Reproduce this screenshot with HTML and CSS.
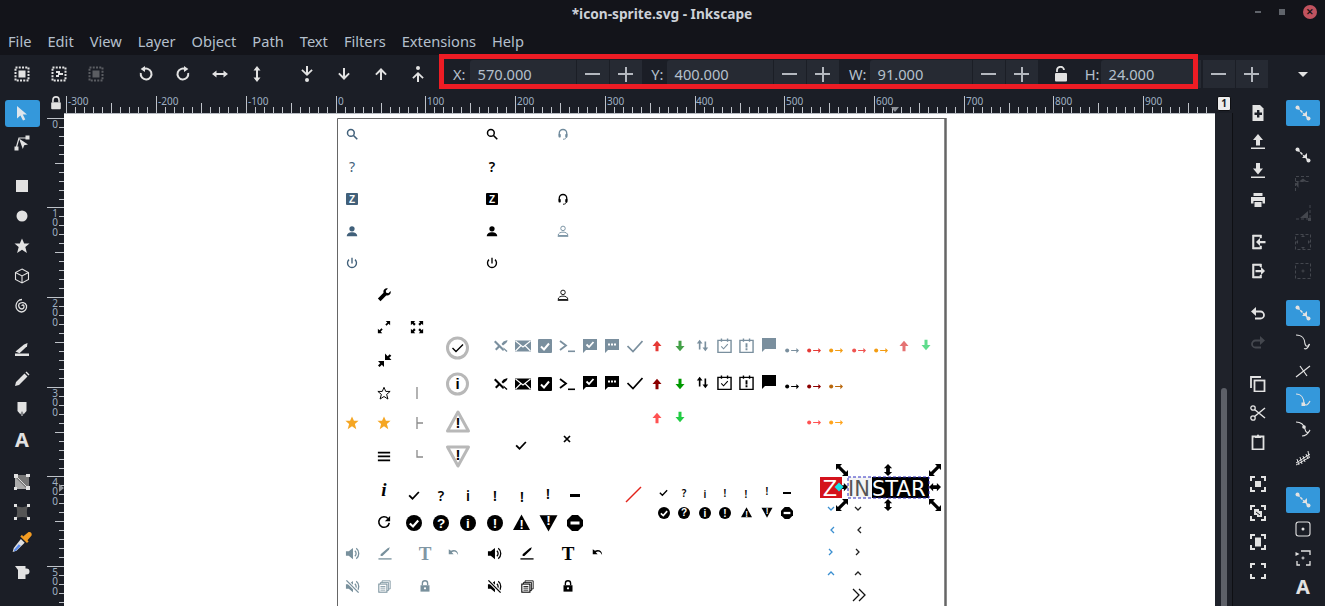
FILE: index.html
```html
<!DOCTYPE html>
<html lang="en">
  <head>
    <meta charset="UTF-8" />
    <title>*icon-sprite.svg - Inkscape</title>
    <link rel="stylesheet" href="styles.css">
  </head>
  <body>
    <svg class="defs" aria-hidden="true">
      <defs>
        <!-- toolbar -->
        <symbol id="sel-all" viewBox="0 0 16 16"><rect x="1.5" y="1.5" width="13" height="13" fill="none" stroke="currentColor" stroke-width="2" stroke-dasharray="2 1.25"/><rect x="4.5" y="4.5" width="7" height="7" fill="currentColor"/></symbol>
        <symbol id="sel-inv" viewBox="0 0 16 16"><rect x="1.5" y="1.5" width="13" height="13" fill="none" stroke="currentColor" stroke-width="2" stroke-dasharray="2 1.25"/><path d="M5 5h4v2h3v2H8v2H5V9h2V7H5z" fill="currentColor"/></symbol>
        <symbol id="rot-ccw" viewBox="0 0 16 16"><path d="M5 3.6A5.4 5.4 0 1 1 2.8 7" fill="none" stroke="currentColor" stroke-width="2"/><path d="M7 0v6L2.600 3z" fill="currentColor"/></symbol>
        <symbol id="rot-cw" viewBox="0 0 16 16"><path d="M11 3.600A5.400 5.400 0 1 0 13.200 7" fill="none" stroke="currentColor" stroke-width="2"/><path d="M9 0v6l4.400-3z" fill="currentColor"/></symbol>
        <symbol id="flip-h" viewBox="0 0 16 16"><path d="M0 8l4.500-3.500v2.500h7V4.500L16 8l-4.500 3.500V9h-7v2.500z" fill="currentColor"/></symbol>
        <symbol id="flip-v" viewBox="0 0 16 16"><path d="M8 0l3.500 4.500H9v7h2.500L8 16l-3.500-4.500H7v-7H4.500z" fill="currentColor"/></symbol>
        <symbol id="to-bottom" viewBox="0 0 16 16"><path d="M7 0h2v6.500l3.500-3.200 1.200 1.300L8 10 2.300 4.600l1.200-1.300L7 6.500z" fill="currentColor"/><circle cx="8" cy="14" r="2" fill="currentColor"/></symbol>
        <symbol id="down" viewBox="0 0 16 16"><path d="M7 2h2v8l3.500-3.300 1.300 1.400L8 14 2.200 8.100l1.300-1.400L7 10z" fill="currentColor"/></symbol>
        <symbol id="up" viewBox="0 0 16 16"><path d="M7 14h2V6l3.500 3.300 1.300-1.400L8 2 2.200 7.900l1.300 1.400L7 6z" fill="currentColor"/></symbol>
        <symbol id="to-top" viewBox="0 0 16 16"><path d="M7 16h2V9.500l3.500 3.200 1.200-1.300L8 6l-5.700 5.400 1.200 1.300L7 9.500z" fill="currentColor"/><circle cx="8" cy="2" r="2" fill="currentColor"/></symbol>
        <symbol id="lock-open" viewBox="0 0 16 16"><path d="M4 6V4.500a3.500 3.500 0 0 1 7-.5" fill="none" stroke="currentColor" stroke-width="1.800"/><rect x="2" y="7" width="12" height="8.500" rx="1" fill="currentColor"/></symbol>
        <symbol id="lock" viewBox="0 0 16 16"><path d="M4.500 7V4.500a3.500 3.500 0 0 1 7 0V7" fill="none" stroke="currentColor" stroke-width="1.800"/><rect x="2.500" y="7" width="11" height="8" rx="1" fill="currentColor"/></symbol>

        <!-- left tools -->
        <symbol id="t-arrow" viewBox="0 0 16 16"><path d="M3 1v12.500l3.400-3L9 15.500l2.300-1.100-2.500-4.800H13z" fill="currentColor"/></symbol>
        <symbol id="t-node" viewBox="0 0 16 16"><rect x="0.500" y="11.500" width="4" height="4" fill="currentColor"/><rect x="11.500" y="0.500" width="4" height="4" fill="currentColor"/><path d="M2.500 12L5 3h7" fill="none" stroke="currentColor" stroke-width="1.200"/><path d="M5 3.500l9 6-3.800.8-1.400 3.700z" fill="currentColor"/></symbol>
        <symbol id="t-rect" viewBox="0 0 16 16"><rect x="2" y="2" width="12" height="12" fill="currentColor"/></symbol>
        <symbol id="t-circle" viewBox="0 0 16 16"><circle cx="8" cy="8" r="5.500" fill="currentColor"/></symbol>
        <symbol id="star" viewBox="0 0 16 16"><path d="M8 .5l2.200 5h5.300l-4.200 3.600 1.600 5.900L8 11.700 3.100 15l1.600-5.900L.5 5.500h5.300z" fill="currentColor"/></symbol>
        <symbol id="t-box" viewBox="0 0 16 16"><path d="M8 1l6.500 3.500v7L8 15l-6.500-3.500v-7zM1.500 4.500L8 8l6.500-3.500M8 8v7" fill="none" stroke="currentColor" stroke-width="1.100"/></symbol>
        <symbol id="t-spiral" viewBox="0 0 16 16"><path d="M8 8a1 1 0 0 1 1.500-1A2.500 2.500 0 0 1 8 11 3.500 3.500 0 0 1 5 6a4.500 4.500 0 0 1 7.500 1.500 5.500 5.500 0 0 1-5 6.500A6 6 0 0 1 2 7.500 6.500 6.500 0 0 1 8 1.500" fill="none" stroke="currentColor" stroke-width="1.300"/></symbol>
        <symbol id="t-calli" viewBox="0 0 16 16"><path d="M1.500 10.500L10 3.500l3.500-1.500-.5 3.300-7.500 7z" fill="currentColor"/><path d="M1 12.500h14V15H1z" fill="currentColor"/></symbol>
        <symbol id="t-pencil" viewBox="0 0 16 16"><path d="M1 15l1-4L10.500 2.500l3 3L5 14zM11.500 1.500l1-1 3 3-1 1z" fill="currentColor"/></symbol>
        <symbol id="t-nib" viewBox="0 0 16 16"><path d="M3.500 1h9v9l-3 3.500L8.500 10v5H7.500v-5l-1 3.500-3-3.500z" fill="currentColor"/></symbol>
        <symbol id="t-grad" viewBox="0 0 16 16"><path d="M1 1h14v14H1z" fill="#777"/><path d="M1 15V3l12 12z" fill="#aaa"/><path d="M1 1l14 14" stroke="#ddd" stroke-width="1"/><path d="M0 0h4v4H0zM12 12h4v4h-4zM12 0h4v3h-4zM0 13h3v3H0z" fill="currentColor"/></symbol>
        <symbol id="t-mesh" viewBox="0 0 16 16"><path d="M2 2c4 1.500 8 1.500 12 0-1.500 4-1.500 8 0 12-4-1.500-8-1.500-12 0 1.500-4 1.500-8 0-12z" fill="#555"/><path d="M0 0h3v3H0zM13 0h3v3h-3zM0 13h3v3H0zM13 13h3v3h-3z" fill="currentColor"/></symbol>
        <symbol id="t-drop" viewBox="0 0 20 20"><path d="M11 5l5-4c1.500-.8 3.500 1 2.700 3l-3.700 4.500 1 1-1.500 1.500-6-6L10 3.500z" fill="#f39c22"/><path d="M9 7.200l3.400 3.400L5 18l-3.500 1 1-3.500z" fill="#e0e0e0"/><path d="M7 12l2 1.500L4.500 18l-2 .7.700-2.200z" fill="#5b8cef"/></symbol>
        <symbol id="t-mug" viewBox="0 0 16 16"><path d="M1 2h10.500v2.500h1a2.500 2.500 0 0 1 0 6h-1V15H4V6z" fill="currentColor"/></symbol>

        <!-- right commands -->
        <symbol id="c-new" viewBox="0 0 16 16"><path d="M2.500 0H10l3.500 3.500V16h-11z" fill="currentColor"/><path d="M7 5h2.400v2.600H12V10H9.400v2.600H7V10H4.500V7.600H7z" fill="#1b1e26"/></symbol>
        <symbol id="c-open" viewBox="0 0 16 16"><path d="M8 0l5 6H10v5.500H6V6H3zM1 13.500h14V15H1z" fill="currentColor"/></symbol>
        <symbol id="c-save" viewBox="0 0 16 16"><path d="M8 11.500l5-6H10V0H6v5.500H3zM1 13.500h14V15H1z" fill="currentColor"/></symbol>
        <symbol id="c-print" viewBox="0 0 16 16"><path d="M3.500 1h9v3h-9zM1 5h14v6.500h-2.500V9h-9v2.500H1zM4.500 10h7v5h-7z" fill="currentColor"/></symbol>
        <symbol id="c-import" viewBox="0 0 16 16"><path d="M2.500 1h9v3H10V2.500H4v11h6V12h1.500v3h-9z" fill="currentColor" stroke="currentColor" stroke-width=".6"/><path d="M15.500 7v2.200H10V12L6 8l4-4v3z" fill="currentColor"/></symbol>
        <symbol id="c-export" viewBox="0 0 16 16"><path d="M2.500 1h9v3H10V2.500H4v11h6V12h1.500v3h-9z" fill="currentColor" stroke="currentColor" stroke-width=".6"/><path d="M5.500 7v2.200H11V12l4-4-4-4v3z" fill="currentColor"/></symbol>
        <symbol id="c-undo" viewBox="0 0 16 16"><path d="M4.500 6.500h6a3.500 3.500 0 0 1 0 7H5" fill="none" stroke="currentColor" stroke-width="1.800"/><path d="M6 2v9L1 6.500z" fill="currentColor"/></symbol>
        <symbol id="c-redo" viewBox="0 0 16 16"><path d="M11.500 6.500h-6a3.500 3.500 0 0 0 0 7H11" fill="none" stroke="currentColor" stroke-width="1.800"/><path d="M10 2v9l5-4.500z" fill="currentColor"/></symbol>
        <symbol id="c-copy" viewBox="0 0 16 16"><path d="M11 1H1v11" fill="none" stroke="currentColor" stroke-width="1.800"/><rect x="4.500" y="4.500" width="10" height="11" fill="none" stroke="currentColor" stroke-width="1.800"/></symbol>
        <symbol id="c-cut" viewBox="0 0 16 16"><circle cx="3" cy="3" r="2.200" fill="none" stroke="currentColor" stroke-width="1.300"/><circle cx="3" cy="13" r="2.200" fill="none" stroke="currentColor" stroke-width="1.300"/><path d="M4.500 4.500L15 13M4.500 11.500L15 3" stroke="currentColor" stroke-width="1.500"/></symbol>
        <symbol id="c-paste" viewBox="0 0 16 16"><path d="M5 2.500H2.500v13h11v-13H11" fill="none" stroke="currentColor" stroke-width="1.800"/><path d="M5 3V1.500h2a1 1 0 0 1 2 0h2V4H5z" fill="currentColor"/></symbol>
        <symbol id="z-sel" viewBox="0 0 16 16"><path d="M1 5V1h4M11 1h4v4M15 11v4h-4M5 15H1v-4" fill="none" stroke="currentColor" stroke-width="2"/><rect x="5" y="5" width="6" height="6" fill="currentColor"/></symbol>
        <symbol id="z-draw" viewBox="0 0 16 16"><path d="M1 5V1h4M11 1h4v4M15 11v4h-4M5 15H1v-4" fill="none" stroke="currentColor" stroke-width="2"/><path d="M4 4h5v2h3v6H7v-2H4z" fill="currentColor"/><path d="M6 7l4 3" stroke="#1b1e26"/></symbol>
        <symbol id="z-page" viewBox="0 0 16 16"><path d="M1 5V1h4M11 1h4v4M15 11v4h-4M5 15H1v-4" fill="none" stroke="currentColor" stroke-width="2"/><rect x="5" y="3.500" width="6" height="9" fill="currentColor"/></symbol>
        <symbol id="z-full" viewBox="0 0 16 16"><path d="M1 5V1h4M11 1h4v4M15 11v4h-4M5 15H1v-4" fill="none" stroke="currentColor" stroke-width="2"/></symbol>
        <symbol id="s-snap" viewBox="0 0 16 16"><path d="M2.500 2.500l11 11" stroke="currentColor" stroke-width="1.500" stroke-dasharray="3 1"/><circle cx="2.500" cy="2.500" r="2" fill="currentColor"/><circle cx="13.500" cy="13.500" r="2" fill="currentColor"/><path d="M12 6v5H7z" fill="currentColor"/></symbol>
        <symbol id="s-dim1" viewBox="0 0 16 16"><path d="M.5 15V.5H15M.5 5.500h15" fill="none" stroke="currentColor" stroke-dasharray="3 2"/><path d="M8 2.500l4 3H4zM.5 8l3-3v7z" fill="currentColor"/></symbol>
        <symbol id="s-dim2" viewBox="0 0 16 16"><path d="M15 0v14H0" fill="none" stroke="currentColor" stroke-dasharray="3 2"/><path d="M13 6v7H5z" fill="currentColor"/><rect x="13" y="13" width="3" height="3" fill="currentColor"/></symbol>
        <symbol id="s-dim3" viewBox="0 0 16 16"><rect x=".5" y=".5" width="15" height="15" fill="none" stroke="currentColor" stroke-dasharray="3 2"/><path d="M8 1l2 2H6zM8 15l2-2H6zM1 8l2-2v4zM15 8l-2-2v4z" fill="currentColor"/></symbol>
        <symbol id="s-dim4" viewBox="0 0 16 16"><rect x=".5" y=".5" width="15" height="15" fill="none" stroke="currentColor" stroke-dasharray="3 2"/><path d="M7.500 6.500h1v1h1v1h-1v1h-1v-1h-1v-1h1z" fill="currentColor"/></symbol>
        <symbol id="s-curve" viewBox="0 0 16 16"><path d="M1 1c6 0 9 4 9 9 1 3 3 3 4.500 0" fill="none" stroke="currentColor" stroke-width="1.100"/><path d="M9 14.500c2 1 4 0 5.500-4.500" fill="none" stroke="currentColor" stroke-width="1.100"/></symbol>
        <symbol id="s-cross" viewBox="0 0 16 16"><path d="M1 14L15 3M5 3l7 10" fill="none" stroke="currentColor" stroke-width="1.200"/></symbol>
        <symbol id="s-node" viewBox="0 0 16 16"><path d="M1 2c5 0 8 4 8 10" fill="none" stroke="currentColor" stroke-width="1.200"/><path d="M9 12c2 2 4 1 6-3" fill="none" stroke="currentColor" stroke-width="1.200"/><rect x="6.500" y="10.500" width="3.500" height="3.500" fill="currentColor"/></symbol>
        <symbol id="s-smooth" viewBox="0 0 16 16"><path d="M1 1c5 0 8 3 9 7 1 5 4 4 5 1M7 15c3 0 6-2 8-6" fill="none" stroke="currentColor" stroke-width="1.100"/><circle cx="9" cy="6" r="1.800" fill="currentColor"/></symbol>
        <symbol id="s-hatch" viewBox="0 0 16 16"><path d="M1 13L15 4M2 9l2 6M5 7l2 7M8 6l2 6M11 4l2 5M13 1l1 6M1 15l14-8" fill="none" stroke="currentColor" stroke-width="1"/></symbol>
        <symbol id="s-page" viewBox="0 0 16 16"><rect x="1" y="1" width="14" height="14" rx="2.500" fill="none" stroke="currentColor" stroke-width="1.100"/><circle cx="8" cy="8" r="1.500" fill="currentColor"/></symbol>
        <symbol id="s-grid" viewBox="0 0 16 16"><path d="M6 1h9v4M15 11v4h-4M5 15H2v-4" fill="none" stroke="currentColor" stroke-width="1.300"/><path d="M.5 2l4 2-4 2z" fill="currentColor"/><path d="M7.500 6.500h1v1h1v1h-1v1h-1v-1h-1v-1h1z" fill="currentColor"/></symbol>

        <!-- drawing sprites -->
        <symbol id="d-search" viewBox="0 0 16 16"><circle cx="6.500" cy="6.500" r="4.500" fill="none" stroke="currentColor" stroke-width="2"/><path d="M10 10l5 5" stroke="currentColor" stroke-width="2.200"/></symbol>
        <symbol id="d-user" viewBox="0 0 16 16"><circle cx="8" cy="5" r="3.500" fill="currentColor"/><path d="M1 15c0-3.500 3-5.500 7-5.500s7 2 7 5.500z" fill="currentColor"/></symbol>
        <symbol id="d-user-line" viewBox="0 0 16 16"><circle cx="8" cy="4.500" r="3" fill="none" stroke="currentColor" stroke-width="1.200"/><path d="M1.500 14c0-3 3-4.500 6.500-4.500s6.500 1.500 6.500 4.500zM1 15.500h14" fill="none" stroke="currentColor" stroke-width="1.200"/></symbol>
        <symbol id="d-power" viewBox="0 0 16 16"><path d="M8 1v7.500" stroke="currentColor" stroke-width="1.800"/><path d="M4 3.500a6 6 0 1 0 8 0" fill="none" stroke="currentColor" stroke-width="1.800"/></symbol>
        <symbol id="d-head" viewBox="0 0 16 16"><path d="M3 10V7a5 5 0 0 1 10 0v3" fill="none" stroke="currentColor" stroke-width="1.800"/><rect x="2" y="8" width="3" height="4.500" rx="1" fill="currentColor"/><rect x="11" y="8" width="3" height="4.500" rx="1" fill="currentColor"/><path d="M12.500 12c0 2-2 3-4.500 3" fill="none" stroke="currentColor" stroke-width="1.200"/></symbol>
        <symbol id="d-wrench" viewBox="0 0 16 16"><path d="M15.500 3.500L13 6l-2.500-.5L10 3l2.500-2.500a4 4 0 0 0-5 5L1 12l3 3 6.500-6.500a4 4 0 0 0 5-5z" fill="currentColor"/></symbol>
        <symbol id="d-expand" viewBox="0 0 16 16"><path d="M10 1h5v5l-1.800-1.800-2.300 2.300-1.400-1.400 2.300-2.300zM6 15H1v-5l1.800 1.800 2.300-2.300 1.400 1.400-2.300 2.300z" fill="currentColor"/></symbol>
        <symbol id="d-full" viewBox="0 0 16 16"><path d="M1 1h5L4.400 2.600 6.500 4.700 4.700 6.500 2.600 4.400 1 6zM15 1v5l-1.600-1.600-2.100 2.100-1.800-1.800 2.100-2.100L10 1zM1 15v-5l1.600 1.600 2.100-2.100 1.800 1.800-2.100 2.100L6 15zM15 15h-5l1.600-1.600-2.100-2.100 1.800-1.800 2.100 2.100L15 10z" fill="currentColor"/></symbol>
        <symbol id="d-star-line" viewBox="0 0 16 16"><path d="M8 1.500l2 4.700h5l-4 3.400 1.500 5.300L8 12l-4.500 2.900L5 9.600l-4-3.400h5z" fill="none" stroke="currentColor" stroke-width="1.100"/></symbol>
        <symbol id="d-menu" viewBox="0 0 16 16"><path d="M1 3h14v2H1zM1 7.500h14v2H1zM1 12h14v2H1z" fill="currentColor"/></symbol>
        <symbol id="d-refresh" viewBox="0 0 16 16"><path d="M12.500 4A6 6 0 1 0 14 9" fill="none" stroke="currentColor" stroke-width="1.800"/><path d="M15 1v6H9z" fill="currentColor"/></symbol>
        <symbol id="d-check" viewBox="0 0 16 16"><path d="M1.500 8.500L6 13l8.500-9" fill="none" stroke="currentColor" stroke-width="2.400"/></symbol>
        <symbol id="d-checkc" viewBox="0 0 16 16"><circle cx="8" cy="8" r="8" fill="currentColor"/><path d="M3.800 8.500L7 11.500l5.200-6" fill="none" stroke="#fff" stroke-width="2.200"/></symbol>
        <symbol id="d-qc" viewBox="0 0 16 16"><circle cx="8" cy="8" r="8" fill="currentColor"/><text x="8" y="12.500" class="sp-q">?</text></symbol>
        <symbol id="d-ic" viewBox="0 0 16 16"><circle cx="8" cy="8" r="8" fill="currentColor"/><text x="8" y="12.800" class="sp-q">i</text></symbol>
        <symbol id="d-ec" viewBox="0 0 16 16"><circle cx="8" cy="8" r="8" fill="currentColor"/><text x="8" y="12.800" class="sp-q">!</text></symbol>
        <symbol id="d-tri" viewBox="0 0 16 16"><path d="M8 .5L16 15H0z" fill="currentColor"/><text x="8" y="14" class="sp-t">!</text></symbol>
        <symbol id="d-itri" viewBox="0 0 16 16"><path d="M0 1h16L8 15.500z" fill="currentColor"/><text x="8" y="10" class="sp-t">!</text></symbol>
        <symbol id="d-stop" viewBox="0 0 16 16"><path d="M5 0h6l5 5v6l-5 5H5l-5-5V5z" fill="currentColor"/><rect x="3.500" y="6.500" width="9" height="3" fill="#fff"/></symbol>
        <symbol id="d-pinoff" viewBox="0 0 16 16"><path d="M1 4l4 4-3 3 1.500 1.500 3-3L10 13l1.500-1.500L2.500 2.500zM14.500 2l-4 1.500-2 2.500 1.500 1.500 2.500-2 1.500-1.500zM10.500 9.500l4 3.500-1 1-3.500-3.500z" fill="currentColor"/></symbol>
        <symbol id="d-mail" viewBox="0 0 16 16"><path d="M0 2.500h16v11H0z" fill="currentColor"/><path d="M.5 3L8 9l7.500-6M.5 13L6 7.500M15.500 13L10 7.500" fill="none" stroke="#fff" stroke-width="1.100"/></symbol>
        <symbol id="d-cbox" viewBox="0 0 16 16"><rect x="1" y="1" width="14" height="14" rx="1" fill="currentColor"/><path d="M4 8.500l3 3 5-6" fill="none" stroke="#fff" stroke-width="2"/></symbol>
        <symbol id="d-term" viewBox="0 0 16 16"><path d="M1 3l6 4.500L1 12" fill="none" stroke="currentColor" stroke-width="1.800"/><path d="M9 12.500h7v1.600H9z" fill="currentColor"/></symbol>
        <symbol id="d-cmt-c" viewBox="0 0 16 16"><path d="M1 1h14v11H4l-3 3z" fill="currentColor"/><path d="M4.500 6.500l2.500 2.500 4.500-5" fill="none" stroke="#fff" stroke-width="1.800"/></symbol>
        <symbol id="d-cmt-d" viewBox="0 0 16 16"><path d="M1 1h14v11H4l-3 3z" fill="currentColor"/><path d="M4 5.500h2v2H4zM7 5.500h2v2H7zM10 5.500h2v2h-2z" fill="#fff"/></symbol>
        <symbol id="d-cmt" viewBox="0 0 16 16"><path d="M1 1h14v11H4l-3 3z" fill="currentColor"/></symbol>
        <symbol id="d-check-l" viewBox="0 0 16 16"><path d="M.5 8L6 13.500 15.500 3" fill="none" stroke="currentColor" stroke-width="1.700"/></symbol>
        <symbol id="d-up" viewBox="0 0 16 16"><path d="M8 1l6 7H10v7H6V8H2z" fill="currentColor"/></symbol>
        <symbol id="d-dn" viewBox="0 0 16 16"><path d="M8 15l6-7H10V1H6v7H2z" fill="currentColor"/></symbol>
        <symbol id="d-updn" viewBox="0 0 16 16"><path d="M4.500 1L8 5.500H5.500V13h-2V5.500H1zM11.500 15l3.500-4.500h-2.500V3h-2v7.500H8z" fill="currentColor"/></symbol>
        <symbol id="d-cal-c" viewBox="0 0 16 16"><path d="M1 2.500h14v13H1z" fill="none" stroke="currentColor" stroke-width="1.500"/><path d="M4 .5h1.500v3.500H4zM10.500 .5H12v3.500h-1.500z" fill="currentColor"/><path d="M4.500 9l2.500 2.500 4.500-5" fill="none" stroke="currentColor" stroke-width="1.200"/></symbol>
        <symbol id="d-cal-e" viewBox="0 0 16 16"><path d="M1 2.500h14v13H1z" fill="none" stroke="currentColor" stroke-width="1.500"/><path d="M4 .5h1.500v3.500H4zM10.500 .5H12v3.500h-1.500zM7 5.500h2V10H7zM7 11h2v2H7z" fill="currentColor"/></symbol>
        <symbol id="d-dot" viewBox="0 0 16 8"><circle cx="2.500" cy="4" r="2.300" fill="currentColor"/><path d="M7 3.300h6V1l3 3-3 3V4.700H7z" fill="currentColor"/></symbol>
        <symbol id="d-speak" viewBox="0 0 16 16"><path d="M1 5.500h3L8.500 2v12L4 10.500H1z" fill="currentColor"/><path d="M10.500 5a4 4 0 0 1 0 6M12 2.500a7 7 0 0 1 0 11" fill="none" stroke="currentColor" stroke-width="1.400"/></symbol>
        <symbol id="d-mute" viewBox="0 0 16 16"><path d="M1 5.500h3L8.500 2v12L4 10.500H1z" fill="currentColor"/><path d="M10.500 5a4 4 0 0 1 0 6M12 2.500a7 7 0 0 1 0 11" fill="none" stroke="currentColor" stroke-width="1.400"/><path d="M1.500 1.500l13 13" stroke="#fff" stroke-width="3.400"/><path d="M1.500 1.500l13 13" stroke="currentColor" stroke-width="1.400"/></symbol>
        <symbol id="d-pen" viewBox="0 0 16 16"><path d="M3 9.500l8-7 2.500-1-1 2.700-7.500 7.300H3z" fill="currentColor"/><path d="M.5 14h15v1.500H.5z" fill="currentColor"/></symbol>
        <symbol id="d-undo" viewBox="0 0 16 16"><path d="M1 3v6.500h6.500L5 7c3-2 6-1.500 8.500 3.500 0-5-4.500-8-9.500-5.500z" fill="currentColor"/></symbol>
        <symbol id="d-stack" viewBox="0 0 16 16"><path d="M5 3V1h10v10h-2M3 5V3h10v10h-2" fill="none" stroke="currentColor" stroke-width="1"/><rect x="1" y="5" width="10" height="10" fill="none" stroke="currentColor" stroke-width="1.300"/><path d="M3 8h6M3 10h6M3 12.500h6" stroke="currentColor"/></symbol>
        <symbol id="d-padlock" viewBox="0 0 16 16"><path d="M4.500 7V4.500a3.500 3.500 0 0 1 7 0V7" fill="none" stroke="currentColor" stroke-width="1.800"/><path d="M2 7h12v8.500H2z" fill="currentColor"/><circle cx="8" cy="11" r="1.500" fill="#fff"/></symbol>
        <symbol id="d-h-d" viewBox="0 0 16 16"><path d="M0 0h8L5.500 2.500l8 8L16 8v8H8l2.500-2.500-8-8L0 8z" fill="#000"/></symbol>
        <symbol id="d-h-a" viewBox="0 0 16 16"><path d="M16 0H8l2.500 2.500-8 8L0 8v8h8l-2.500-2.500 8-8L16 8z" fill="#000"/></symbol>
        <symbol id="d-h-v" viewBox="0 0 16 16"><path d="M8 0l5.500 5.500h-3v5h3L8 16l-5.500-5.500h3v-5h-3z" fill="#000"/></symbol>
        <symbol id="d-h-h" viewBox="0 0 16 16"><path d="M0 8l5.500-5.500v3h5v-3L16 8l-5.500 5.500v-3h-5v3z" fill="#000"/></symbol>

        <!-- ruler steps -->
        <g id="rule-h"><path d="M.5 3v17M9.500 14v6M18.500 14v6M27.500 14v6M36.500 14v6M45.500 10v10M54.500 14v6M63.500 14v6M72.500 14v6M81.500 14v6"/></g>
        <g id="rule-v"><path d="M0 .5h17M12 9.500h5M12 18.500h5M12 27.500h5M12 36.500h5M8 45.500h9M12 54.500h5M12 63.500h5M12 72.500h5M12 81.500h5"/></g>
      </defs>
    </svg>

    <div class="app">
      <header class="titlebar">
        <span class="title">*icon-sprite.svg - Inkscape</span>
        <div class="winctl">
          <span class="win-min"></span>
          <span class="win-max"></span>
          <span class="win-close">✕</span>
        </div>
      </header>

      <nav class="menubar">
        <span>File</span><span>Edit</span><span>View</span><span>Layer</span><span>Object</span><span>Path</span><span>Text</span><span>Filters</span><span>Extensions</span><span>Help</span>
      </nav>

      <div class="toolbar">
        <div class="tb-btn"><svg class="ico"><use href="#sel-all"/></svg></div>
        <div class="tb-btn"><svg class="ico"><use href="#sel-inv"/></svg></div>
        <div class="tb-btn dim"><svg class="ico"><use href="#sel-all"/></svg></div>
        <div class="tb-btn gap"><svg class="ico"><use href="#rot-ccw"/></svg></div>
        <div class="tb-btn"><svg class="ico"><use href="#rot-cw"/></svg></div>
        <div class="tb-btn"><svg class="ico"><use href="#flip-h"/></svg></div>
        <div class="tb-btn"><svg class="ico"><use href="#flip-v"/></svg></div>
        <div class="tb-btn gap"><svg class="ico"><use href="#to-bottom"/></svg></div>
        <div class="tb-btn"><svg class="ico"><use href="#down"/></svg></div>
        <div class="tb-btn"><svg class="ico"><use href="#up"/></svg></div>
        <div class="tb-btn"><svg class="ico"><use href="#to-top"/></svg></div>

        <label class="lbl lbl-x">X:</label>
        <span class="num">570.000</span><span class="step minus"></span><span class="step plus"></span>
        <label class="lbl lbl-y">Y:</label>
        <span class="num">400.000</span><span class="step minus"></span><span class="step plus"></span>
        <label class="lbl lbl-w">W:</label>
        <span class="num num-w">91.000</span><span class="step minus"></span><span class="step plus"></span>
        <div class="lockbtn"><svg class="ico"><use href="#lock-open"/></svg></div>
        <label class="lbl lbl-h">H:</label>
        <span class="num num-h">24.000</span><span class="step minus step-h"></span><span class="step plus"></span>
        <div class="more"></div>
        <div class="redbox"></div>
      </div>

      <div class="workspace">
        <aside class="tools">
          <div class="tool"><div class="active"><svg class="ico"><use href="#t-arrow"/></svg></div></div>
          <div class="tool"><svg class="ico"><use href="#t-node"/></svg></div>
          <div class="tool gap"><svg class="ico"><use href="#t-rect"/></svg></div>
          <div class="tool"><svg class="ico"><use href="#t-circle"/></svg></div>
          <div class="tool"><svg class="ico"><use href="#star"/></svg></div>
          <div class="tool"><svg class="ico"><use href="#t-box"/></svg></div>
          <div class="tool"><svg class="ico"><use href="#t-spiral"/></svg></div>
          <div class="tool gap"><svg class="ico"><use href="#t-calli"/></svg></div>
          <div class="tool"><svg class="ico"><use href="#t-pencil"/></svg></div>
          <div class="tool"><svg class="ico"><use href="#t-nib"/></svg></div>
          <div class="tool tool-a">A</div>
          <div class="tool gap"><svg class="ico"><use href="#t-grad"/></svg></div>
          <div class="tool"><svg class="ico"><use href="#t-mesh"/></svg></div>
          <div class="tool"><svg class="ico big"><use href="#t-drop"/></svg></div>
          <div class="tool"><svg class="ico"><use href="#t-mug"/></svg></div>
        </aside>

        <div class="corner"><svg class="ico lock-ico"><use href="#lock"/></svg></div>

        <svg class="ruler-h" viewBox="64 93 1151 20">
          <g class="ticks">
            <use href="#rule-h" x="66" y="93"/><use href="#rule-h" x="156" y="93"/><use href="#rule-h" x="246" y="93"/><use href="#rule-h" x="336" y="93"/>
            <use href="#rule-h" x="425" y="93"/><use href="#rule-h" x="515" y="93"/><use href="#rule-h" x="605" y="93"/><use href="#rule-h" x="695" y="93"/>
            <use href="#rule-h" x="784" y="93"/><use href="#rule-h" x="874" y="93"/><use href="#rule-h" x="964" y="93"/><use href="#rule-h" x="1053" y="93"/>
            <use href="#rule-h" x="1143" y="93"/>
          </g>
          <g class="rule-txt">
            <text x="68" y="105">-300</text><text x="158" y="105">-200</text><text x="248" y="105">-100</text><text x="338" y="105">0</text>
            <text x="427" y="105">100</text><text x="517" y="105">200</text><text x="607" y="105">300</text><text x="696" y="105">400</text>
            <text x="786" y="105">500</text><text x="876" y="105">600</text><text x="966" y="105">700</text><text x="1055" y="105">800</text>
            <text x="1145" y="105">900</text>
          </g>
          <path d="M891 107h8l-4 5z" fill="#8d9197"/>
        </svg>

        <svg class="ruler-v" viewBox="47 113 17 493">
          <g class="ticks">
            <use href="#rule-v" x="47" y="118"/><use href="#rule-v" x="47" y="207"/><use href="#rule-v" x="47" y="297"/>
            <use href="#rule-v" x="47" y="387"/><use href="#rule-v" x="47" y="476"/><use href="#rule-v" x="47" y="566"/>
          </g>
          <g class="rule-txt mid">
            <text x="55" y="128">0</text>
            <text x="55" y="217">1<tspan x="55" dy="9.300">0</tspan><tspan x="55" dy="9.300">0</tspan></text>
            <text x="55" y="307">2<tspan x="55" dy="9.300">0</tspan><tspan x="55" dy="9.300">0</tspan></text>
            <text x="55" y="397">3<tspan x="55" dy="9.300">0</tspan><tspan x="55" dy="9.300">0</tspan></text>
            <text x="55" y="486">4<tspan x="55" dy="9.300">0</tspan><tspan x="55" dy="9.300">0</tspan></text>
            <text x="55" y="576">5<tspan x="55" dy="9.300">0</tspan><tspan x="55" dy="9.300">0</tspan></text>
          </g>
          <path d="M59 484l5 4-5 4z" fill="#8d9197"/>
        </svg>

        <svg class="canvas" viewBox="64 113 1151 493">
          <rect x="64" y="113" width="1151" height="1" fill="#b6bac0"/>
          <path d="M945 118.500H337.500V606" fill="none" stroke="#666" stroke-width="1"/>
          <path d="M945.500 118V606" fill="none" stroke="#666" stroke-width="2.500"/>

          <!-- account column, slate -->
          <g color="#41607a">
            <use href="#d-search" x="346" y="128" width="12" height="12"/>
            <text x="352" y="172" class="sp-glyph">?</text>
            <rect x="346" y="193" width="12" height="12" rx="1" fill="#41607a"/>
            <text x="352" y="203" class="sp-z">Z</text>
            <use href="#d-user" x="346" y="225" width="12" height="12"/>
            <use href="#d-power" x="346" y="257" width="12" height="12"/>
          </g>
          <!-- account column, black -->
          <g color="#000">
            <use href="#d-search" x="486" y="128" width="12" height="12"/>
            <text x="492" y="172" class="sp-glyph blk">?</text>
            <rect x="486" y="193" width="12" height="12" rx="1"/>
            <text x="492" y="203" class="sp-z">Z</text>
            <use href="#d-user" x="486" y="225" width="12" height="12"/>
            <use href="#d-power" x="486" y="257" width="12" height="12"/>
            <use href="#d-head" x="557" y="193" width="12" height="12"/>
            <use href="#d-user-line" x="557" y="289" width="12" height="12"/>
          </g>
          <g color="#6f8a9c">
            <use href="#d-head" x="557" y="128" width="12" height="12"/>
            <use href="#d-user-line" x="557" y="225" width="12" height="12"/>
          </g>

          <!-- view tools -->
          <g color="#000">
            <use href="#d-wrench" x="377" y="288" width="14" height="14"/>
            <use href="#d-expand" x="377" y="320" width="14" height="14"/>
            <use href="#d-full" x="410" y="320" width="14" height="14"/>
            <path d="M385 353.500V360h6.500l-2.200-2.200 2-2-1.600-1.600-2 2zM384 361h-6l2.200 2.200-2.200 2.200 1.600 1.600 2.200-2.200 2.200 2.200z"/>
            <use href="#d-star-line" x="377" y="386" width="14" height="14"/>
            <use href="#d-menu" x="377" y="449" width="14" height="14"/>
            <use href="#d-refresh" x="377" y="515" width="14" height="14"/>
            <text x="384" y="496" class="sp-info">i</text>
          </g>
          <g color="#f5a623">
            <use href="#star" x="345" y="416" width="14" height="14"/>
            <use href="#star" x="377" y="416" width="14" height="14"/>
          </g>
          <path d="M417 387v12M417 417v12M417 423h6M417 450v7h6" fill="none" stroke="#8a8a8a" stroke-width="1.300"/>

          <!-- status rings -->
          <g fill="none" stroke="#b8b8b8" stroke-width="3">
            <circle cx="457.500" cy="348" r="10"/>
            <circle cx="457.500" cy="384" r="10"/>
            <path d="M458 412l10.500 19h-21z" stroke-linejoin="round"/>
            <path d="M447.500 447h21L458 466z" stroke-linejoin="round"/>
          </g>
          <path d="M452.500 348l3.500 3.500 7-7" fill="none" stroke="#000" stroke-width="1.400"/>
          <text x="457.500" y="389" class="sp-ring">i</text>
          <text x="458" y="428" class="sp-ring">!</text>
          <text x="458" y="460" class="sp-ring">!</text>

          <!-- message row, grey -->
          <g color="#7a8f9e">
            <use href="#d-pinoff" x="493" y="338" width="16" height="16"/>
            <use href="#d-mail" x="515" y="338" width="16" height="16"/>
            <use href="#d-cbox" x="537" y="338" width="16" height="16"/>
            <use href="#d-term" x="559" y="338" width="16" height="16"/>
            <use href="#d-cmt-c" x="582" y="338" width="16" height="16"/>
            <use href="#d-cmt-d" x="604" y="338" width="16" height="16"/>
            <use href="#d-check-l" x="627" y="338" width="16" height="16"/>
            <use href="#d-updn" x="696" y="339" width="13" height="13"/>
            <use href="#d-cal-c" x="717" y="338" width="15" height="15"/>
            <use href="#d-cal-e" x="739" y="338" width="15" height="15"/>
            <use href="#d-cmt" x="761" y="337" width="16" height="16"/>
            <use href="#d-dot" x="785" y="347" width="14" height="7"/>
          </g>
          <!-- message row, black -->
          <g color="#000">
            <use href="#d-pinoff" x="493" y="376" width="16" height="16"/>
            <use href="#d-mail" x="515" y="376" width="16" height="16"/>
            <use href="#d-cbox" x="537" y="376" width="16" height="16"/>
            <use href="#d-term" x="559" y="376" width="16" height="16"/>
            <use href="#d-cmt-c" x="582" y="375" width="16" height="16"/>
            <use href="#d-cmt-d" x="604" y="375" width="16" height="16"/>
            <use href="#d-check-l" x="627" y="375" width="16" height="16"/>
            <use href="#d-updn" x="696" y="376" width="13" height="13"/>
            <use href="#d-cal-c" x="717" y="375" width="15" height="15"/>
            <use href="#d-cal-e" x="739" y="375" width="15" height="15"/>
            <use href="#d-cmt" x="761" y="374" width="16" height="16"/>
            <use href="#d-dot" x="785" y="383" width="14" height="7"/>
            <use href="#d-check" x="515" y="439" width="12" height="12"/>
            <path d="M564 436l6 6M570 436l-6 6" fill="none" stroke="#000" stroke-width="1.700"/>
          </g>

          <use href="#d-up" x="651" y="340" width="12" height="12" color="#e53935"/>
          <use href="#d-dn" x="674" y="340" width="12" height="12" color="#43a047"/>
          <use href="#d-up" x="651" y="378" width="12" height="12" color="#8b0000"/>
          <use href="#d-dn" x="674" y="378" width="12" height="12" color="#009900"/>
          <use href="#d-up" x="651" y="412" width="12" height="12" color="#ff5252"/>
          <use href="#d-dn" x="674" y="411" width="12" height="12" color="#22cc44"/>
          <use href="#d-up" x="898" y="340" width="12" height="12" color="#e57373"/>
          <use href="#d-dn" x="920" y="339" width="12" height="12" color="#5fdc8c"/>

          <use href="#d-dot" x="807" y="347" width="14" height="7" color="#e53935"/>
          <use href="#d-dot" x="829" y="347" width="14" height="7" color="#f39c12"/>
          <use href="#d-dot" x="852" y="347" width="14" height="7" color="#ef5350"/>
          <use href="#d-dot" x="874" y="347" width="14" height="7" color="#f39c12"/>
          <use href="#d-dot" x="807" y="383" width="14" height="7" color="#8b0000"/>
          <use href="#d-dot" x="829" y="383" width="14" height="7" color="#b8660a"/>
          <use href="#d-dot" x="807" y="419" width="14" height="7" color="#ff5252"/>
          <use href="#d-dot" x="829" y="419" width="14" height="7" color="#ffa41c"/>

          <!-- status glyphs, large -->
          <g color="#000">
            <use href="#d-check" x="408" y="489" width="12" height="12"/>
            <text x="441" y="501" class="sp-glyph blk">?</text>
            <text x="468" y="501" class="sp-glyph blk">i</text>
            <text x="495" y="501" class="sp-glyph blk">!</text>
            <text x="522" y="502" class="sp-glyph blk">!</text>
            <text x="548" y="499" class="sp-glyph blk">!</text>
            <rect x="570" y="494" width="10" height="3"/>
            <use href="#d-checkc" x="406" y="515" width="16" height="16"/>
            <use href="#d-qc" x="433" y="515" width="16" height="16"/>
            <use href="#d-ic" x="460" y="515" width="16" height="16"/>
            <use href="#d-ec" x="487" y="515" width="16" height="16"/>
            <use href="#d-tri" x="512" y="514" width="19" height="17"/>
            <use href="#d-itri" x="539" y="514" width="19" height="18"/>
            <use href="#d-stop" x="567" y="515" width="16" height="16"/>
          </g>
          <path d="M626 502l15-15" stroke="#e2231a" stroke-width="1.500"/>

          <!-- status glyphs, small -->
          <g color="#000">
            <use href="#d-check" x="659" y="488" width="9" height="9"/>
            <text x="684" y="497" class="sp-small">?</text>
            <text x="705" y="498" class="sp-small">i</text>
            <text x="725" y="497" class="sp-small">!</text>
            <text x="746" y="498" class="sp-small">!</text>
            <text x="767" y="495" class="sp-small">!</text>
            <rect x="783" y="492" width="8" height="2"/>
            <use href="#d-checkc" x="658" y="507" width="12" height="12"/>
            <use href="#d-qc" x="678" y="507" width="12" height="12"/>
            <use href="#d-ic" x="699" y="507" width="12" height="12"/>
            <use href="#d-ec" x="719" y="507" width="12" height="12"/>
            <use href="#d-tri" x="740" y="507" width="13" height="11"/>
            <use href="#d-itri" x="761" y="507" width="12" height="11"/>
            <use href="#d-stop" x="781" y="507" width="12" height="12"/>
          </g>

          <!-- media row, grey -->
          <g color="#78909c">
            <use href="#d-speak" x="345" y="546" width="15" height="15"/>
            <use href="#d-pen" x="378" y="546" width="14" height="14"/>
            <use href="#d-undo" x="448" y="547" width="12" height="12"/>
            <use href="#d-mute" x="345" y="579" width="15" height="15"/>
            <use href="#d-stack" x="378" y="580" width="13" height="13"/>
            <use href="#d-padlock" x="419" y="580" width="12" height="12"/>
            <text x="425" y="560" class="sp-serif grey">T</text>
          </g>
          <!-- media row, black -->
          <g color="#000">
            <use href="#d-speak" x="487" y="546" width="15" height="15"/>
            <use href="#d-pen" x="520" y="546" width="14" height="14"/>
            <use href="#d-undo" x="592" y="547" width="12" height="12"/>
            <use href="#d-mute" x="487" y="579" width="15" height="15"/>
            <use href="#d-stack" x="521" y="580" width="13" height="13"/>
            <use href="#d-padlock" x="562" y="580" width="12" height="12"/>
            <text x="568" y="560" class="sp-serif">T</text>
          </g>

          <!-- logo, selected -->
          <rect x="820" y="477" width="22" height="21" fill="#d4121c"/>
          <text x="830" y="496" class="logo logo-z">Z</text>
          <rect x="872" y="477" width="57" height="21" fill="#000"/>
          <rect x="848" y="477" width="24" height="21" fill="#f4f4f4"/>
          <text x="848" y="496" class="logo logo-in">IN</text>
          <text x="872" y="496" class="logo logo-star">STAR</text>
          <rect x="848" y="477" width="81" height="21" fill="none" stroke="#2b2bc0" stroke-dasharray="3 2"/>
          <use href="#d-h-d" x="836" y="464" width="12" height="12"/>
          <use href="#d-h-a" x="929" y="464" width="12" height="12"/>
          <use href="#d-h-a" x="836" y="499" width="12" height="12"/>
          <use href="#d-h-d" x="929" y="499" width="12" height="12"/>
          <use href="#d-h-v" x="882" y="464" width="12" height="12"/>
          <use href="#d-h-v" x="882" y="499" width="12" height="12"/>
          <use href="#d-h-h" x="836" y="481" width="12" height="12"/>
          <use href="#d-h-h" x="929" y="481" width="12" height="12"/>
          <path d="M839 482.500l4.500 4.500-4.500 4.500-4.500-4.500z" fill="#19e3ea"/>

          <!-- chevrons -->
          <g fill="none" stroke-width="1.300">
            <path d="M828 507l3 3 3-3M834 527l-3 3 3 3M829 549l3 3-3 3M828 575l3-3 3 3" stroke="#3b8fd0"/>
            <path d="M855 507l3 3 3-3M861 527l-3 3 3 3M856 549l3 3-3 3M855 575l3-3 3 3" stroke="#222"/>
            <path d="M853 589l6 6-6 6M859 589l6 6-6 6" stroke="#111"/>
          </g>
        </svg>

        <div class="vscroll"><div class="thumb"></div></div>
        <div class="pagenum">1</div>

        <aside class="commands">
          <div class="col">
            <div class="cmd"><svg class="ico"><use href="#c-new"/></svg></div>
            <div class="cmd"><svg class="ico"><use href="#c-open"/></svg></div>
            <div class="cmd"><svg class="ico"><use href="#c-save"/></svg></div>
            <div class="cmd"><svg class="ico"><use href="#c-print"/></svg></div>
            <div class="cmd gap"><svg class="ico"><use href="#c-import"/></svg></div>
            <div class="cmd"><svg class="ico"><use href="#c-export"/></svg></div>
            <div class="cmd gap"><svg class="ico"><use href="#c-undo"/></svg></div>
            <div class="cmd off"><svg class="ico"><use href="#c-redo"/></svg></div>
            <div class="cmd gap"><svg class="ico"><use href="#c-copy"/></svg></div>
            <div class="cmd"><svg class="ico"><use href="#c-cut"/></svg></div>
            <div class="cmd"><svg class="ico"><use href="#c-paste"/></svg></div>
            <div class="cmd gap"><svg class="ico"><use href="#z-sel"/></svg></div>
            <div class="cmd"><svg class="ico"><use href="#z-draw"/></svg></div>
            <div class="cmd"><svg class="ico"><use href="#z-page"/></svg></div>
            <div class="cmd"><svg class="ico"><use href="#z-full"/></svg></div>
          </div>
          <div class="col">
            <div class="cmd on"><svg class="ico"><use href="#s-snap"/></svg></div>
            <div class="cmd gap"><svg class="ico"><use href="#s-snap"/></svg></div>
            <div class="cmd off"><svg class="ico"><use href="#s-dim1"/></svg></div>
            <div class="cmd off"><svg class="ico"><use href="#s-dim2"/></svg></div>
            <div class="cmd off"><svg class="ico"><use href="#s-dim3"/></svg></div>
            <div class="cmd off"><svg class="ico"><use href="#s-dim4"/></svg></div>
            <div class="cmd on gap"><svg class="ico"><use href="#s-snap"/></svg></div>
            <div class="cmd"><svg class="ico"><use href="#s-curve"/></svg></div>
            <div class="cmd"><svg class="ico"><use href="#s-cross"/></svg></div>
            <div class="cmd on"><svg class="ico"><use href="#s-node"/></svg></div>
            <div class="cmd"><svg class="ico"><use href="#s-smooth"/></svg></div>
            <div class="cmd"><svg class="ico"><use href="#s-hatch"/></svg></div>
            <div class="cmd on gap"><svg class="ico"><use href="#s-snap"/></svg></div>
            <div class="cmd"><svg class="ico"><use href="#s-page"/></svg></div>
            <div class="cmd"><svg class="ico"><use href="#s-grid"/></svg></div>
            <div class="cmd cmd-a">A</div>
          </div>
        </aside>
      </div>
    </div>
  </body>
</html>
```

FILE: styles.css
```css
html,
body {
  margin: 0;
  padding: 0;
  background: #14151b;
}
.defs {
  position: absolute;
  width: 0;
  height: 0;
}
.app {
  width: 1325px;
  height: 606px;
  overflow: hidden;
  display: flex;
  flex-direction: column;
  font-family: "Noto Sans", sans-serif;
  color: #b5c0cd;
}
.ico {
  display: block;
  width: 16px;
  height: 16px;
  color: #e2e2e2;
}

/* title */
.titlebar {
  height: 27px;
  position: relative;
  display: flex;
  justify-content: center;
  align-items: center;
  background: #13141a;
}
.title {
  font-size: 13.700px;
  font-weight: 700;
  color: #cdd1d8;
  margin-left: -1px;
}
.winctl {
  position: absolute;
  right: 8px;
  top: 5px;
  display: flex;
  align-items: center;
  gap: 18px;
}
.win-min {
  width: 6px;
  height: 2px;
  background: #60646b;
}
.win-max {
  width: 6px;
  height: 6px;
  background: #60646b;
}
.win-close {
  width: 14px;
  height: 14px;
  border-radius: 50%;
  background: #c1535f;
  color: #1b1416;
  font-size: 9px;
  font-weight: 700;
  line-height: 14px;
  text-align: center;
}

/* menu */
.menubar {
  height: 28px;
  display: flex;
  align-items: center;
  background: #13141a;
  font-size: 14.670px;
}
.menubar span {
  padding: 0 8px;
}

/* top toolbar */
.toolbar {
  height: 38px;
  position: relative;
  display: flex;
  align-items: flex-start;
  padding: 5px 0 0 3px;
  box-sizing: border-box;
  background: #1b1e26;
}
.tb-btn {
  width: 37px;
  height: 28px;
  display: flex;
  justify-content: center;
  align-items: center;
}
.tb-btn.gap {
  margin-left: 13px;
}
.tb-btn.dim .ico {
  color: #5b5d62;
}
.lbl {
  height: 28px;
  line-height: 28px;
  font-size: 14.670px;
  text-align: right;
  padding-right: 4px;
  box-sizing: border-box;
}
.lbl-x {
  width: 33.500px;
}
.lbl-y {
  width: 25px;
  padding-right: 3px;
}
.lbl-w {
  width: 31px;
  padding-right: 3px;
}
.lbl-h {
  width: 17px;
  padding-right: 1px;
}
.num {
  width: 106px;
  height: 28px;
  line-height: 28px;
  padding-left: 8px;
  box-sizing: border-box;
  background: #262a33;
  border-radius: 3px 0 0 3px;
  font-size: 14.670px;
}
.num-w {
  width: 102px;
}
.num-h {
  width: 100px;
}
.step {
  width: 32px;
  height: 28px;
  margin-left: 1px;
  background-color: #262a33;
}
.minus {
  background-image: linear-gradient(#b4b8bf, #b4b8bf);
  background-size: 15px 2px;
  background-position: center;
  background-repeat: no-repeat;
}
.plus {
  background-image: linear-gradient(#b4b8bf, #b4b8bf), linear-gradient(#b4b8bf, #b4b8bf);
  background-size: 15px 2px, 2px 15px;
  background-position: center;
  background-repeat: no-repeat;
}
.step-h {
  margin-left: 2px;
}
.lockbtn {
  width: 46px;
  height: 28px;
  display: flex;
  justify-content: center;
  align-items: center;
}
.more {
  width: 0;
  height: 0;
  margin: 12px 0 0 30px;
  border-left: 5px solid transparent;
  border-right: 5px solid transparent;
  border-top: 5px solid #e2e2e2;
}
.redbox {
  position: absolute;
  left: 439px;
  top: -1px;
  width: 759px;
  height: 35px;
  box-sizing: border-box;
  border: 5px solid #ed1c24;
}

/* main area */
.workspace {
  flex: 1;
  display: grid;
  grid-template-columns: 47px 17px 1151px 18px 92px;
  grid-template-rows: 20px 493px;
  background: #1b1e26;
}
.tools {
  grid-column: 1;
  grid-row: 1 / 3;
  padding-top: 5px;
  box-sizing: border-box;
}
.tool {
  width: 44px;
  height: 30px;
  display: flex;
  justify-content: center;
  align-items: center;
}
.tool.gap {
  margin-top: 13px;
}
.active {
  width: 35px;
  height: 27px;
  display: flex;
  justify-content: center;
  align-items: center;
  border-radius: 3px;
  background: #3498db;
}
.active .ico {
  color: #dfe6ec;
}
.big {
  width: 22px;
  height: 22px;
}
.tool-a {
  font-size: 20px;
  font-weight: 700;
  color: #e2e2e2;
}
.corner {
  grid-column: 2;
  grid-row: 1;
  display: flex;
  justify-content: center;
  align-items: center;
  height: 20px;
}
.lock-ico {
  width: 14px;
  height: 14px;
}
.ruler-h {
  grid-column: 3 / 4;
  grid-row: 1;
  width: 1151px;
  height: 20px;
}
.ruler-v {
  grid-column: 2;
  grid-row: 2;
  width: 17px;
  height: 493px;
}
.ticks {
  fill: none;
  stroke: #bfc3c9;
  stroke-width: 1;
}
.rule-txt {
  font-size: 10px;
  fill: #9fb0c2;
}
.rule-txt.mid {
  text-anchor: middle;
}
.canvas {
  grid-column: 3;
  grid-row: 2;
  width: 1151px;
  height: 493px;
  background: #fff;
}
.canvas text {
  opacity: 0.99;
}
.vscroll {
  grid-column: 4;
  grid-row: 2;
  background: #1f222a;
  border-right: 1px solid #0e0f13;
  box-sizing: border-box;
  padding: 275px 0 0 6px;
}
.thumb {
  width: 6px;
  height: 218px;
  border-radius: 3px 3px 0 0;
  background: #5d6068;
}
.pagenum {
  grid-column: 4;
  grid-row: 1;
  width: 14px;
  height: 15px;
  margin: 3px 0 0 2px;
  border: 1px solid #0e0f13;
  box-sizing: border-box;
  border-radius: 2px;
  background: #ececec;
  color: #1b1e26;
  font-size: 10px;
  font-weight: 700;
  line-height: 13px;
  text-align: center;
}

/* right bars */
.commands {
  grid-column: 5;
  grid-row: 1 / 3;
  display: flex;
  padding: 5px 0 0 8px;
  box-sizing: border-box;
}
.col {
  flex: none;
  width: 45px;
}
.cmd {
  width: 34px;
  height: 29px;
  display: flex;
  justify-content: center;
  align-items: center;
  position: relative;
}
.cmd.gap {
  margin-top: 13px;
}
.cmd.off .ico {
  color: #44474e;
}
.cmd.on::before {
  content: "";
  position: absolute;
  inset: 2px 0 1px;
  border-radius: 2px;
  background: #3498db;
}
.cmd.on .ico {
  position: relative;
}
.cmd-a {
  font-size: 20px;
  font-weight: 700;
  color: #e2e2e2;
}

/* sprite labels */
.sp-glyph {
  font-family: "Noto Sans", sans-serif;
  font-size: 14px;
  text-anchor: middle;
  fill: #41607a;
}
.sp-glyph.blk {
  fill: #000;
  font-weight: 600;
}
.sp-z {
  font-family: "Liberation Sans", sans-serif;
  font-size: 10px;
  font-weight: 700;
  text-anchor: middle;
  fill: #fff;
}
.sp-info {
  font-family: "Liberation Serif", serif;
  font-size: 19px;
  font-style: italic;
  font-weight: 700;
  text-anchor: middle;
}
.sp-ring {
  font-family: "Liberation Sans", sans-serif;
  font-size: 15px;
  font-weight: 700;
  text-anchor: middle;
  fill: #000;
}
.sp-q {
  font-family: "Liberation Sans", sans-serif;
  font-size: 13.500px;
  font-weight: 700;
  text-anchor: middle;
  fill: #fff;
}
.sp-t {
  font-family: "Liberation Sans", sans-serif;
  font-size: 12px;
  font-weight: 700;
  text-anchor: middle;
  fill: #fff;
}
.sp-small {
  font-family: "Noto Sans", sans-serif;
  font-size: 10px;
  font-weight: 600;
  text-anchor: middle;
  fill: #000;
}
.sp-serif {
  font-family: "Liberation Serif", serif;
  font-size: 19px;
  font-weight: 700;
  text-anchor: middle;
  fill: #000;
}
.sp-serif.grey {
  fill: #7f95a3;
}
.logo {
  font-family: "DejaVu Sans", sans-serif;
  font-size: 21px;
}
.logo-z {
  text-anchor: middle;
  fill: #fff;
}
.logo-in {
  fill: #555;
}
.logo-star {
  fill: #fff;
}
```
